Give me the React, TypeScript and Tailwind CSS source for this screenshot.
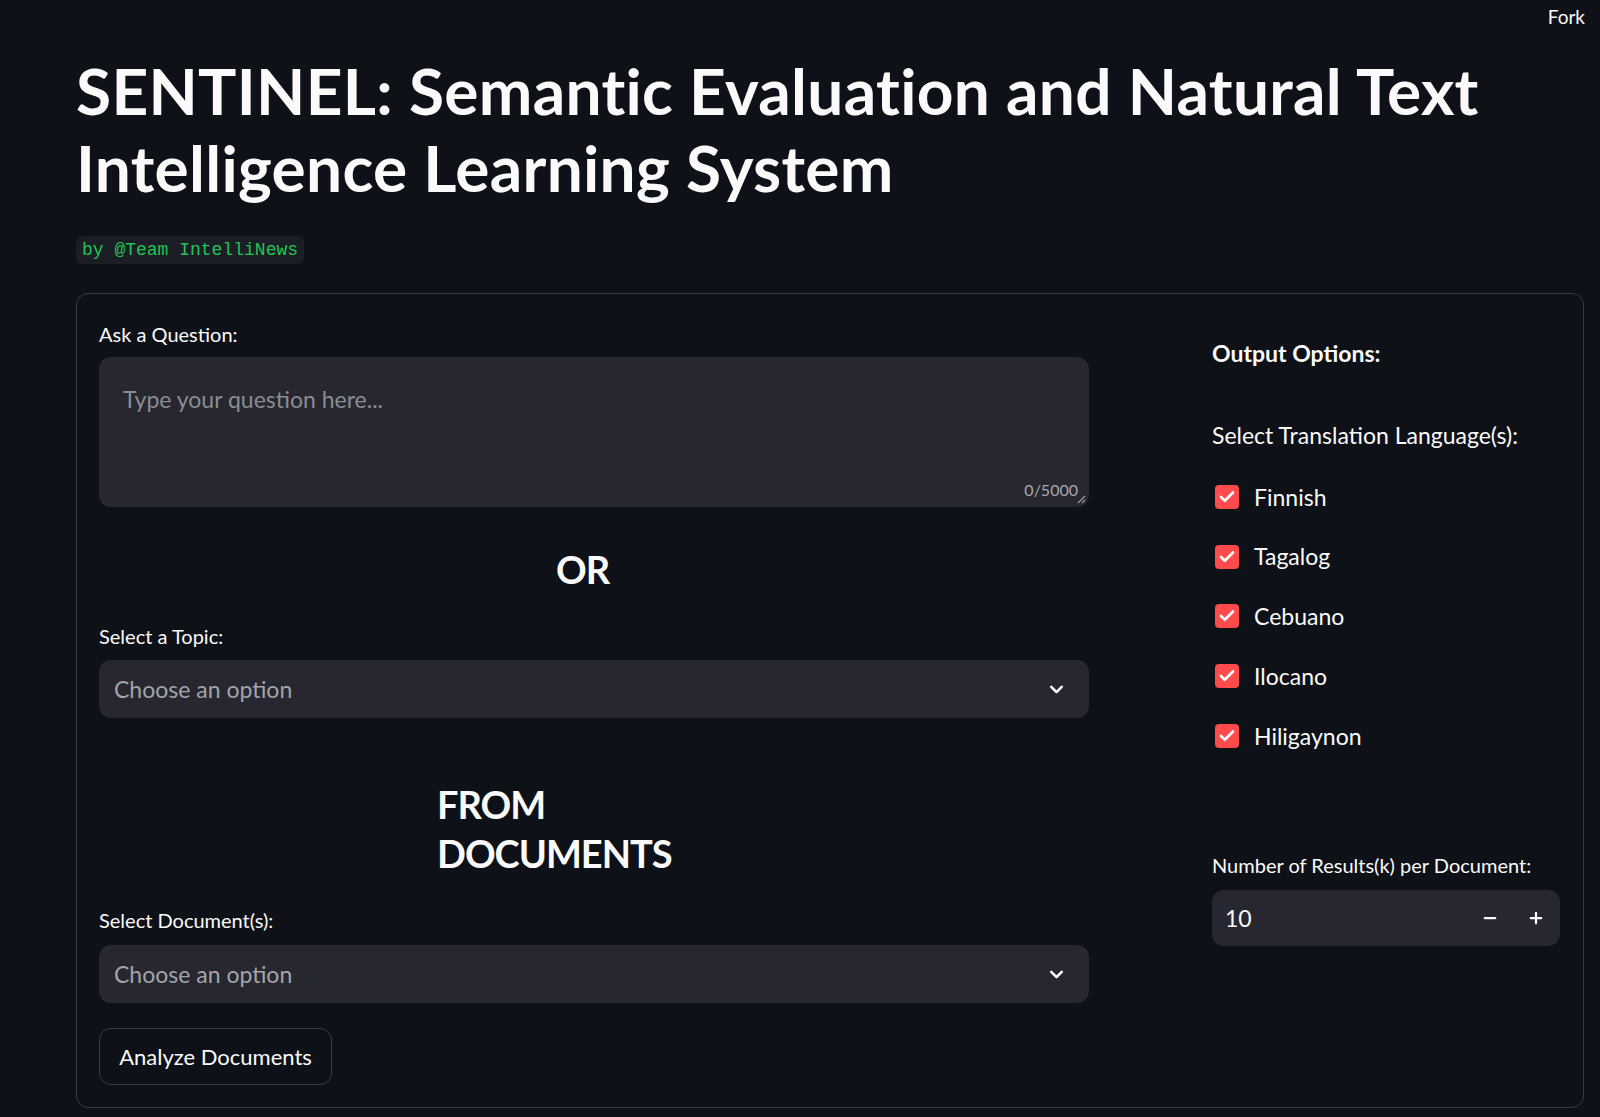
import React from 'react';
import { Check, ChevronDown, Minus, Plus } from 'lucide-react';

const languages = ['Finnish', 'Tagalog', 'Cebuano', 'Ilocano', 'Hiligaynon'];

const font = "font-['Lato','Noto_Sans',sans-serif]";

const SelectBox = () => (
  <div className="flex h-[58px] w-full items-center justify-between rounded-[12px] bg-[#262730] pl-[15px] pr-[22px]">
    <span className="text-[23px] text-[#a3a4a8]">Choose an option</span>
    <ChevronDown className="h-[21px] w-[21px] text-[#fafafa]" strokeWidth={3} />
  </div>
);

const App = () => {
  return (
    <div className={`relative min-h-screen bg-[#0e1117] pl-[76px] pr-[16px] text-[#fafafa] ${font}`}>
      <div className="absolute right-[15px] top-[3px] text-[19px]">Fork</div>

      <h1 className="pt-[52px] text-[64px] font-bold leading-[77px] tracking-[0.3px]">
        SENTINEL: Semantic Evaluation and Natural Text
        <br />
        Intelligence Learning System
      </h1>

      <div className="mt-[30px] inline-flex h-[28px] items-center rounded-[6px] bg-[#1c1e26] px-[6px] font-['Liberation_Mono',monospace] text-[18px] text-[#21c354]">
        by @Team IntelliNews
      </div>

      <div className="mt-[29px] flex h-[815px] rounded-[12px] border border-[#393b42] pl-[22px]">
        {/* left column */}
        <div className="flex w-[990px] flex-col">
          <div className="mt-[26px] text-[20px] leading-[28px]">Ask a Question:</div>
          <div className="relative mt-[9px] h-[150px] rounded-[12px] bg-[#262730] px-[24px] pt-[26px]">
            <div className="text-[23px] leading-[32px] text-[#8b8c92]">Type your question here...</div>
            <div className="absolute bottom-[5px] right-[11px] text-[16px] text-[#a8a9ad]">0/5000</div>
            <svg className="absolute bottom-[3px] right-[3px]" width="9" height="9" viewBox="0 0 9 9">
              <path d="M1 8 L8 1 M5 8 L8 5" stroke="#9a9ba0" strokeWidth="1.2" />
            </svg>
          </div>

          <div className="mt-[38px] pl-[1px] pr-[24px] text-center text-[38px] font-bold leading-[48px] tracking-[-1px]">OR</div>

          <div className="mt-[29px] text-[20px] leading-[28px]">Select a Topic:</div>
          <div className="mt-[10px]">
            <SelectBox />
          </div>

          <div className="mt-[62px] ml-[338px] w-[260px] text-[38px] font-bold leading-[49px] tracking-[-1px]">
            FROM DOCUMENTS
          </div>

          <div className="mt-[28px] text-[20px] leading-[28px]">Select Document(s):</div>
          <div className="mt-[11px]">
            <SelectBox />
          </div>

          <button className="mt-[25px] h-[57px] w-[233px] rounded-[12px] border border-[#393b42] text-[22px]">
            Analyze Documents
          </button>
        </div>

        {/* right column */}
        <div className="ml-[123px] flex w-[348px] flex-col">
          <div className="mt-[43px] text-[23px] font-bold leading-[32px]">Output Options:</div>
          <div className="mt-[50px] text-[23px] leading-[32px]">Select Translation Language(s):</div>
          <div className="mt-[16px] flex flex-col">
            {languages.map((lang) => (
              <div key={lang} className="flex h-[59.8px] items-center">
                <div className="ml-[3px] flex h-[24px] w-[24px] items-center justify-center rounded-[4px] bg-[#ff4b4b]">
                  <Check className="h-[18px] w-[18px] text-white" strokeWidth={3.5} />
                </div>
                <span className="ml-[15px] text-[23px]">{lang}</span>
              </div>
            ))}
          </div>
          <div className="mt-[85px] text-[20px] leading-[28px]">Number of Results(k) per Document:</div>
          <div className="mt-[11px] flex h-[56px] items-center rounded-[12px] bg-[#262730] pl-[13px]">
            <span className="flex-1 text-[23px]">10</span>
            <Minus className="mr-[28px] h-[18px] w-[18px]" strokeWidth={3} />
            <Plus className="mr-[15px] h-[18px] w-[18px]" strokeWidth={3} />
          </div>
        </div>
      </div>
    </div>
  );
};

export default App;
